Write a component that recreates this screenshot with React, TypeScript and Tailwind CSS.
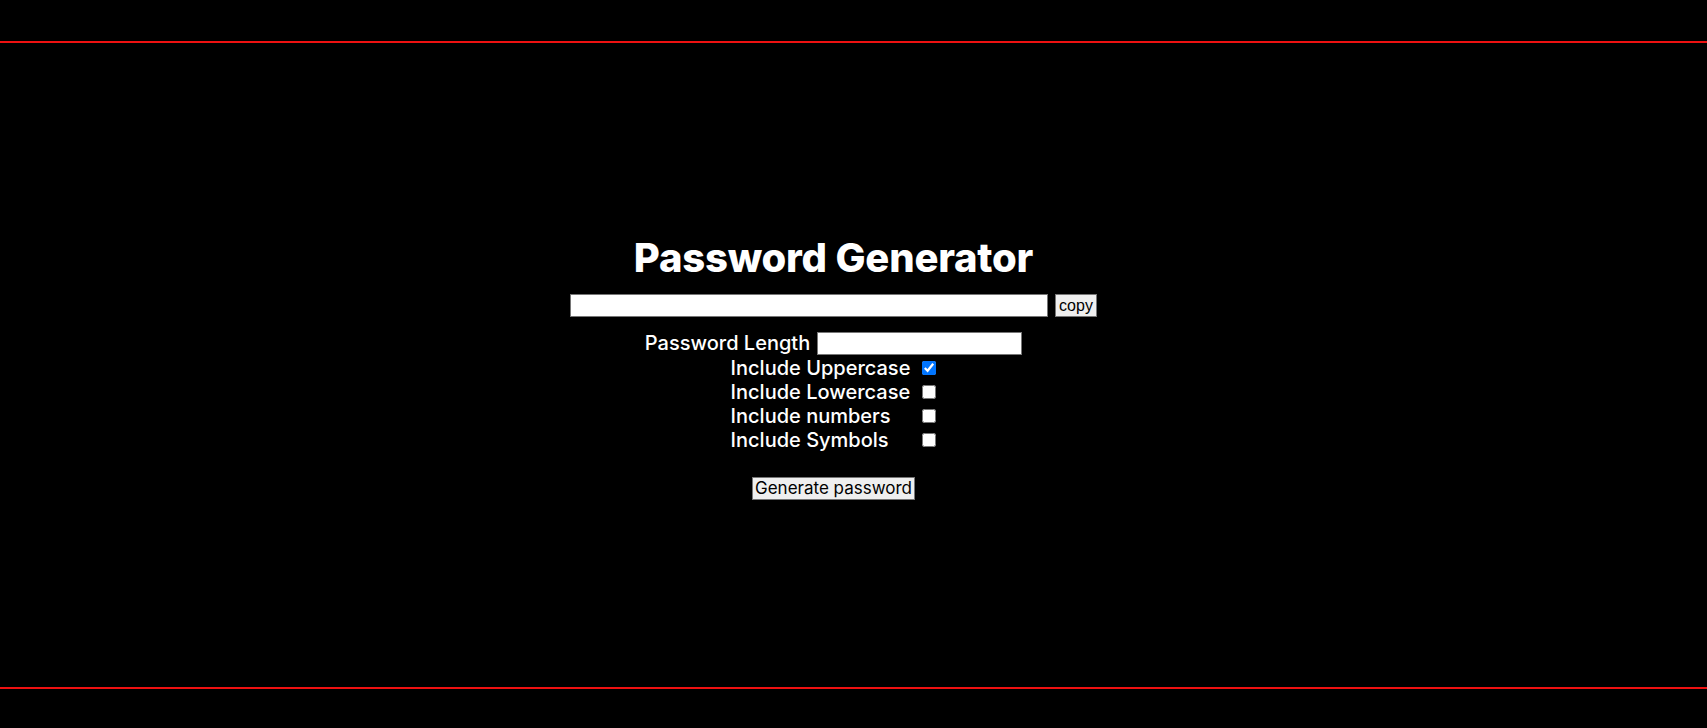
import { useState } from "react";

const options = [
  { key: "upper", label: "Include Uppercase" },
  { key: "lower", label: "Include Lowercase" },
  { key: "numbers", label: "Include numbers" },
  { key: "symbols", label: "Include Symbols" },
];

const App = () => {
  const [checked, setChecked] = useState<Record<string, boolean>>({
    upper: true,
    lower: false,
    numbers: false,
    symbols: false,
  });

  return (
    <div className="flex h-screen flex-col bg-black font-['Inter',sans-serif] text-white">
      <div className="h-[41px] shrink-0" />
      <div className="h-[2px] shrink-0 bg-[#ee1111]" />

      <main className="flex flex-1 flex-col items-center justify-center pr-[40px] pt-[5px]">
        <h1 className="text-[40px] font-extrabold leading-[46px] tracking-[-0.2px]">
          Password Generator
        </h1>

        <div className="mt-[13px] flex items-center gap-[7px]">
          <input
            type="text"
            readOnly
            className="h-[23px] w-[478px] border border-[#767676] bg-white text-black"
          />
          <button className="h-[23px] border border-[#767676] bg-[#efefef] px-[3px] font-['Liberation_Sans',sans-serif] text-[16px] leading-none text-black">
            copy
          </button>
        </div>

        <div className="mt-[15px] flex items-center gap-[7px]">
          <label className="text-[20px] font-medium leading-[23px]">Password Length</label>
          <input
            type="number"
            className="h-[23px] w-[205px] border border-[#767676] bg-white text-black"
          />
        </div>

        <div className="mt-[1px] grid grid-cols-[auto_auto] items-center gap-x-[12px]">
          {options.map((o) => (
            <label key={o.key} className="contents">
              <span className="text-[20px] font-medium leading-[24px]">{o.label}</span>
              <input
                type="checkbox"
                checked={checked[o.key]}
                onChange={() => setChecked({ ...checked, [o.key]: !checked[o.key] })}
                className="h-[14px] w-[14px]"
              />
            </label>
          ))}
        </div>

        <button className="mt-[25px] h-[23px] border border-[#767676] bg-[#efefef] px-[2px] text-[17px] leading-none text-black">
          Generate password
        </button>
      </main>

      <div className="h-[2px] shrink-0 bg-[#ee1111]" />
      <div className="h-[39px] shrink-0" />
    </div>
  );
};

export default App;
